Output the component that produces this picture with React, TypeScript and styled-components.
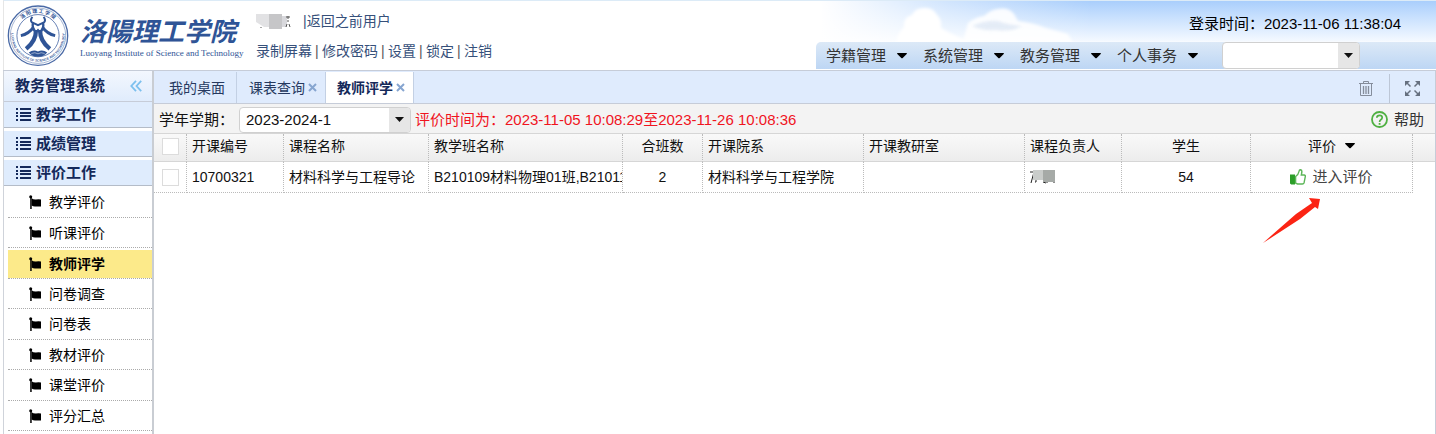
import React from 'react';
import styled, { createGlobalStyle, css } from 'styled-components';

const GlobalStyle = createGlobalStyle`
  * { box-sizing: border-box; }
  body {
    margin: 0;
    background: #fff;
    color: #111;
    font-family: "Liberation Sans", "Noto Sans CJK SC", sans-serif;
    font-size: 14px;
    line-height: 20px;
  }
  a { color: inherit; text-decoration: none; }
  button, select, input { font: inherit; color: inherit; margin: 0; }
  button { border: 0; padding: 0; background: none; cursor: pointer; }
  ul { list-style: none; margin: 0; padding: 0; }
  svg { display: block; flex: none; }
`;

const Page = styled.div`
  display: flex;
  flex-direction: column;
  min-height: 100vh;
  padding-left: 3px;
`;

/* ---------- header ---------- */

const Header = styled.header`
  position: relative;
  display: flex;
  height: 70px;
  border-top: 1px solid #dcebf7;
  border-left: 1px solid #e6e6e6;
  background:
    linear-gradient(to right, #fff 57%, rgba(255, 255, 255, 0.45) 66%, rgba(255, 255, 255, 0) 76%),
    linear-gradient(to bottom, #a9cefc 0, #c6dffe 15px, #f4f9ff 40px, #fff 42px);
`;

const Brand = styled.a`
  display: flex;
  gap: 11px;
  width: 252px;
  padding: 3px 0 0 3px;
`;

const BrandText = styled.span`
  display: flex;
  flex-direction: column;
  color: #2f5496;
  padding-top: 8px;
  white-space: nowrap;
`;

const BrandName = styled.span`
  font: italic 700 26px/36px "Noto Sans CJK SC", sans-serif;
`;

const BrandLatin = styled.span`
  font: 9px/10px "Liberation Serif", serif;
`;

const UserLinks = styled.nav`
  display: flex;
  flex-direction: column;
  gap: 10px;
  padding-top: 10px;
  color: #36507a;
  white-space: nowrap;
`;

const LinkRow = styled.div<{ $gap: number }>`
  display: flex;
  align-items: center;
  gap: ${p => p.$gap}px;
  height: 20px;
`;

const Divider = styled.span`
  width: 4px;
  color: #555;
`;

const Spacer = styled.div`
  flex: 1;
`;

const Clouds = styled.svg`
  position: absolute;
  right: 270px;
  top: 0;
`;

const HeaderRight = styled.div`
  position: relative;
  display: flex;
  flex-direction: column;
  width: 620px;
  font-size: 15px;
`;

const LoginTime = styled.div`
  height: 41px;
  padding: 13px 35px 0 0;
  text-align: right;
  color: #000;
`;

const MenuBar = styled.nav`
  display: flex;
  align-items: center;
  height: 27px;
  padding-left: 10px;
  border-top-left-radius: 5px;
  background: linear-gradient(to bottom, #dce9f7, #bdd6f4);
  color: #333;
`;

const MenuButton = styled.button`
  display: flex;
  align-items: center;
  gap: 11px;
  width: 97px;
`;

/* ---------- shared drop-down ---------- */

const SelectWrap = styled.span<{ $w: number; $h: number }>`
  position: relative;
  display: flex;
  width: ${p => p.$w}px;
  height: ${p => p.$h}px;
  border: 1px solid #d0d0d0;
  border-radius: 4px;
  background: #fff;
  overflow: hidden;

  select {
    flex: 1;
    min-width: 0;
    appearance: none;
    border: 0;
    padding: 0 22px 0 6px;
    background: transparent;
    font-size: 15px;
    color: #111;
  }
`;

const SelectArrow = styled.span`
  position: absolute;
  top: 0;
  right: 0;
  bottom: 0;
  width: 21px;
  display: flex;
  align-items: center;
  justify-content: center;
  background: #e6e6e6;
  pointer-events: none;
`;

const MenuSelect = styled.div`
  margin-left: 8px;
`;

/* ---------- body ---------- */

const Body = styled.div`
  flex: 1;
  display: flex;
  border-top: 1px solid #c6ccd8;
`;

const Sidebar = styled.aside`
  width: 151px;
  flex: none;
  border-left: 1px solid #cfd3da;
  border-right: 2px solid #c9cdd3;
  color: #14295a;
`;

const SideTitle = styled.div`
  display: flex;
  align-items: center;
  justify-content: space-between;
  height: 31px;
  padding: 0 10px 0 11px;
  border-bottom: 1px solid #c6ccd8;
  background: linear-gradient(to bottom, #f3f7fe, #e0ecfc);
  font-weight: 700;
  font-size: 15px;
`;

const Groups = styled.div`
  display: flex;
  flex-direction: column;
  gap: 3px;
`;

const Group = styled.button`
  display: flex;
  align-items: center;
  gap: 5px;
  height: 26px;
  padding-left: 12px;
  border-bottom: 1px solid #b4bcc8;
  background: #dfecfd;
  font-weight: 700;
  font-size: 15px;
`;

const SubList = styled.ul`
  padding: 1px 0 0 4px;
`;

const SubItem = styled.li<{ $active?: boolean }>`
  height: 30px;
  padding-top: ${p => (p.$active ? 2 : 0)}px;
  border-bottom: 1px dotted #aaa;
  color: #000;

  &:nth-child(odd) { height: 31px; }

  a {
    display: flex;
    align-items: center;
    gap: 8px;
    height: 100%;
    padding-left: 21px;
    ${p => p.$active && css`
      background: #fcea8a;
      font-weight: 700;
    `}
  }
`;

const Main = styled.main`
  flex: 1;
  min-width: 0;
  border-right: 1px solid #c6ccd8;
`;

const TabBar = styled.div`
  display: flex;
  align-items: flex-end;
  height: 33px;
  border-bottom: 1px solid #c6ccd8;
  background: #dfebfd;
  color: #26395f;
`;

const Tab = styled.div<{ $active?: boolean }>`
  display: flex;
  align-items: center;
  gap: 3px;
  height: 31px;
  padding: 0 8px 0 12px;
  border-right: 1px solid #c3d0e4;
  white-space: nowrap;

  &:first-child { padding: 0 11px 0 15px; }

  ${p => p.$active && css`
    padding-left: 11px;
    background: #fff;
    color: #14295a;
    font-weight: 700;
  `}
`;

const ToolButton = styled.button<{ $divided?: boolean }>`
  display: flex;
  align-items: center;
  justify-content: center;
  width: 46px;
  height: 29px;
  ${p => p.$divided && css`border-left: 1px solid #bcc6d6;`}
`;

const Toolbar = styled.div`
  display: flex;
  align-items: center;
  height: 30px;
  padding: 2px 11px 0 5px;
  border-bottom: 1px solid #d6d6d6;
  background: #f3f3f3;
  font-size: 15px;
  white-space: nowrap;
`;

const TermLabel = styled.label`
  width: 80px;
`;

const Notice = styled.span`
  margin-left: 4px;
  color: #f0141e;
`;

const HelpLink = styled.a`
  display: flex;
  align-items: center;
  gap: 6px;
  color: #333;
`;

const Grid = styled.table`
  width: 100%;
  table-layout: fixed;
  border-collapse: separate;
  border-spacing: 0;
`;

const HeadRow = styled.tr`
  background: linear-gradient(to bottom, #f9f9f9, #ececec);
`;

const Th = styled.th<{ $center?: boolean; $last?: boolean }>`
  height: 28px;
  padding: 0 5px;
  border-right: ${p => (p.$last ? '0' : '1px dotted #bbb')};
  border-bottom: 1px solid #d6d6d6;
  font-weight: 400;
  text-align: ${p => (p.$center ? 'center' : 'left')};
  line-height: 24px;
  vertical-align: top;
  white-space: nowrap;
`;

const Td = styled.td<{ $center?: boolean; $last?: boolean; $open?: boolean }>`
  position: relative;
  height: 31px;
  padding: 0 5px;
  ${p => !p.$last && css`
    border-right: 1px dotted #bbb;
    border-bottom: 1px dotted #bbb;
  `}
  text-align: ${p => (p.$center ? 'center' : 'left')};
  white-space: nowrap;
  overflow: ${p => (p.$open ? 'visible' : 'hidden')};
`;

const Inline = styled.span`
  display: flex;
  align-items: center;
  justify-content: center;
  gap: 9px;
`;

const Check = styled.input`
  appearance: none;
  display: block;
  width: 17px;
  height: 17px;
  margin: 0 3px;
  border: 1px solid #dcdcdc;
  background: #fff;

  ${HeadRow} & { margin-top: 4px; }
`;

const EnterLink = styled.a`
  display: flex;
  align-items: center;
  justify-content: center;
  gap: 6px;
  color: #444;
  font-size: 15px;
`;

const Pointer = styled.svg`
  position: absolute;
  left: 12px;
  top: 36px;
`;

/* ---------- drawings ---------- */

const Caret = () => (
  <svg width="10" height="6" viewBox="0 0 10 6" aria-hidden="true">
    <path d="M.6 0h8.800q.9.300.3 1L5.700 5q-.7.700-1.400 0L.3 1Q-.3.300.6 0z" fill="#000" />
  </svg>
);

const SmallCaret = () => (
  <svg width="9" height="5" viewBox="0 0 9 5" aria-hidden="true">
    <path d="M0 0h9L4.500 5z" fill="#111" />
  </svg>
);

const Seal = () => (
  <svg width="62" height="64" viewBox="18 12 188 192" aria-hidden="true">
    <defs>
      <path id="ringTop" d="M46 122A68 68 0 1 1 178 122" />
      <path id="ringLow" d="M32 92A81 81 0 1 0 192 92" />
    </defs>
    <g fill="none" stroke="#4a6aa6">
      <circle cx="112" cy="107" r="90" strokeWidth="4" />
      <circle cx="112" cy="107" r="84" strokeWidth="1.500" />
      <circle cx="112" cy="107" r="64" strokeWidth="2.500" />
    </g>
    <g fill="#2f5496" textAnchor="middle">
      <text fontSize="10" fontWeight="700" fontFamily="Liberation Sans, sans-serif">
        <textPath href="#ringLow" startOffset="50%">LUOYANG INSTITUTE OF SCIENCE AND TECHNOLOGY</textPath>
      </text>
      <text fontSize="15" fontFamily="Noto Sans CJK SC, sans-serif" fontWeight="700">
        <textPath href="#ringTop" startOffset="50%">洛 阳 理 工 学 院</textPath>
      </text>
    </g>
    <g fill="none" stroke="#2f5496">
      <path d="M95 50q-8 10-1 17l18 8 18-8q7-7-1-17" strokeWidth="6" />
      <path d="M97 68q-5 14 9 29M127 68q5 14-9 29" strokeWidth="7" />
      <path d="M98 82q-14 20-38 25M126 82q14 20 38 25" strokeWidth="9" />
      <path d="M106 90q0 34-30 57M118 90q0 34 30 57" strokeWidth="13" />
      <path d="M106 96l6-7 6 7" strokeWidth="5" />
    </g>
    <path d="M84 158q14-10 28-3 14-7 28 3-10 13-28 13t-28-13z" fill="#2f5496" />
    <path d="M92 161q11-5 20 1 9-6 20-1" fill="none" stroke="#fff" strokeWidth="1.500" />
  </svg>
);

const NameMosaic = () => (
  <svg width="35" height="18" viewBox="0 0 35 18" aria-hidden="true">
    <path d="M0 2h13v13H8L0 10z" fill="#e2e2e4" />
    <path d="M13 2h13v15H13z" fill="#c6c6c8" />
    <path d="M26 4h5v11h-5z" fill="#d8d8dc" />
    <path d="M30 5h4M31 9h2M32 4v3M31 12l-1 3M33 12l1 3M5 15v1" stroke="#555" fill="none" />
  </svg>
);

const TeacherMosaic = () => (
  <svg width="26" height="16" viewBox="0 0 26 16" aria-hidden="true">
    <path d="M0 3h8M4 3L1 14M3 7h3v6H5M13 13l3 1M17 10v4M24 3v11" stroke="#222" fill="none" />
    <path d="M3 1h10v10H3z" fill="#c9ccca" />
    <path d="M13 1h12v12H13z" fill="#a6aaa7" />
  </svg>
);

const CloudArt = () => (
  <Clouds width="280" height="41" viewBox="0 0 280 41" aria-hidden="true">
    <defs>
      <filter id="soft" x="-10%" y="-20%" width="120%" height="150%">
        <feGaussianBlur stdDeviation="1.600" />
      </filter>
    </defs>
    <g fill="#fff" filter="url(#soft)">
      <path d="M10 44q0-10 8-18-1-10 8-12 3-7 12-7 9-1 13 7 5 4 4 13 8 5 22 11l8 6z" />
      <path d="M82 22q8-6 16-7 6-6 14-7 10-2 16 5l4 7q16 2 28 7l22 6 6 11H76z" opacity=".9" />
    </g>
    <g fill="#dfe8f5" filter="url(#soft)" opacity=".8">
      <path d="M86 25q14-6 26-5 10 4 24 5-10 6-26 4-14 1-24-4z" />
    </g>
  </Clouds>
);

const ListIcon = () => (
  <svg width="15" height="13" viewBox="0 0 15 13" aria-hidden="true" fill="#14295a">
    {[0, 4, 7, 11].map(y => (
      <React.Fragment key={y}>
        <rect x="0" y={y} width="2" height="2" />
        <rect x="4" y={y} width="11" height="2" />
      </React.Fragment>
    ))}
  </svg>
);

const FlagIcon = () => (
  <svg width="12" height="14" viewBox="0 0 12 14" aria-hidden="true">
    <circle cx="1.700" cy="1.700" r="1.500" />
    <path d="M1.200 2h1.500v12H1.200z" />
    <path d="M2.600 3.200q1.800 1.400 4.400 1.200 2.600-.3 5 0v7H6Q4 11.400 2.600 10.400z" />
  </svg>
);

const CollapseIcon = () => (
  <svg width="12" height="12" viewBox="0 0 12 12" fill="none" stroke="#7cc0ee" strokeWidth="1.800" aria-hidden="true">
    <path d="M6 .8L1.300 6 6 11.200M11.200.8L6.500 6l4.700 5.200" />
  </svg>
);

const CloseIcon = () => (
  <svg width="9" height="9" viewBox="0 0 9 9" stroke="#86a5d0" strokeWidth="2" aria-hidden="true">
    <path d="M1 1l7 7M8 1L1 8" />
  </svg>
);

const TrashIcon = () => (
  <svg width="14" height="15" viewBox="0 0 14 15" fill="none" stroke="#858d9b" aria-hidden="true">
    <path d="M0 2.500h14M4.500 2V.5h5V2" />
    <path d="M1.500 3v11.500h11V3" />
    <path d="M4.500 5v8M7 5v8M9.500 5v8" strokeWidth="1.300" />
  </svg>
);

const ExpandIcon = () => (
  <svg width="15" height="15" viewBox="0 0 15 15" aria-hidden="true">
    <path d="M0 0h5L0 5zM15 0v5L10 0zM0 15v-5l5 5zM15 15h-5l5-5z" fill="#66707f" />
    <path d="M1.500 1.500l4 4M13.500 1.500l-4 4M1.500 13.500l4-4M13.500 13.500l-4-4" stroke="#66707f" strokeWidth="1.500" />
  </svg>
);

const HelpIcon = () => (
  <svg width="17" height="17" viewBox="0 0 17 17" fill="none" stroke="#4fb042" aria-hidden="true">
    <circle cx="8.500" cy="8.500" r="7.500" strokeWidth="1.800" />
    <path d="M5.800 6.800Q6 4.300 8.600 4.300t2.600 2.300Q11.200 8 9.800 8.800 8.600 9.500 8.600 11" strokeWidth="1.700" />
    <path d="M8.600 12v1.800" strokeWidth="1.800" />
  </svg>
);

const ThumbIcon = () => (
  <svg width="16" height="16" viewBox="0 0 16 16" aria-hidden="true">
    <path d="M0 5.500h5v10H1.200L0 14.500z" fill="#2b9e28" />
    <path
      d="M5.600 7.500Q8.500 5.500 9 2.500 9.200.7 10.600.8q1.600.4 1.200 2.700L11.300 6h3q1.300.3 1 1.700l-1.200 6q-.4 1.300-1.700 1.300H7.500l-1.900-.9z"
      fill="#fff"
      stroke="#5cb658"
      strokeWidth="1.400"
    />
  </svg>
);

/* ---------- data ---------- */

const menus = ['学籍管理', '系统管理', '教务管理', '个人事务'];
const groups = ['教学工作', '成绩管理', '评价工作'];
const pages = ['教学评价', '听课评价', '教师评学', '问卷调查', '问卷表', '教材评价', '课堂评价', '评分汇总'];
const currentPage = '教师评学';
const userLinks = ['录制屏幕', '修改密码', '设置', '锁定', '注销'];
const columnWidths = [33, 97, 145, 194, 80, 161, 161, 97, 129, 162];

export default function App() {
  return (
    <Page>
      <GlobalStyle />
      <Header>
        <Brand href="#">
          <Seal />
          <BrandText>
            <BrandName>洛陽理工学院</BrandName>
            <BrandLatin>Luoyang Institute of Science and Technology</BrandLatin>
          </BrandText>
        </Brand>
        <UserLinks>
          <LinkRow $gap={12}>
            <NameMosaic />
            <span>|<a href="#">返回之前用户</a></span>
          </LinkRow>
          <LinkRow $gap={3}>
            {userLinks.map((t, i) => (
              <React.Fragment key={t}>
                {i > 0 && <Divider>|</Divider>}
                <a href="#">{t}</a>
              </React.Fragment>
            ))}
          </LinkRow>
        </UserLinks>
        <Spacer />
        <CloudArt />
        <HeaderRight>
          <LoginTime>登录时间：2023-11-06 11:38:04</LoginTime>
          <MenuBar>
            {menus.map(m => (
              <MenuButton key={m} type="button">{m}<Caret /></MenuButton>
            ))}
            <MenuSelect>
              <SelectWrap $w={138} $h={27}>
                <select aria-label="快捷菜单"><option value="" /></select>
                <SelectArrow><SmallCaret /></SelectArrow>
              </SelectWrap>
            </MenuSelect>
          </MenuBar>
        </HeaderRight>
      </Header>

      <Body>
        <Sidebar>
          <SideTitle>教务管理系统<button type="button" aria-label="收起"><CollapseIcon /></button></SideTitle>
          <Groups>
            {groups.map(g => (
              <Group key={g} type="button"><ListIcon />{g}</Group>
            ))}
          </Groups>
          <SubList>
            {pages.map(p => (
              <SubItem key={p} $active={p === currentPage}>
                <a href="#"><FlagIcon />{p}</a>
              </SubItem>
            ))}
          </SubList>
        </Sidebar>

        <Main>
          <TabBar>
            <Tab><a href="#">我的桌面</a></Tab>
            <Tab><a href="#">课表查询</a><button type="button" aria-label="关闭课表查询"><CloseIcon /></button></Tab>
            <Tab $active><a href="#">教师评学</a><button type="button" aria-label="关闭教师评学"><CloseIcon /></button></Tab>
            <Spacer />
            <ToolButton type="button" aria-label="清空"><TrashIcon /></ToolButton>
            <ToolButton type="button" aria-label="全屏" $divided><ExpandIcon /></ToolButton>
          </TabBar>
          <Toolbar>
            <TermLabel htmlFor="term">学年学期：</TermLabel>
            <SelectWrap $w={172} $h={26}>
              <select id="term" defaultValue="2023-2024-1"><option>2023-2024-1</option></select>
              <SelectArrow><SmallCaret /></SelectArrow>
            </SelectWrap>
            <Notice>评价时间为：2023-11-05 10:08:29至2023-11-26 10:08:36</Notice>
            <Spacer />
            <HelpLink href="#"><HelpIcon />帮助</HelpLink>
          </Toolbar>
          <Grid>
            <colgroup>
              {columnWidths.map((w, i) => <col key={i} width={w} />)}
              <col />
            </colgroup>
            <thead>
              <HeadRow>
                <Th><Check type="checkbox" aria-label="全选" /></Th>
                <Th>开课编号</Th>
                <Th>课程名称</Th>
                <Th>教学班名称</Th>
                <Th $center>合班数</Th>
                <Th>开课院系</Th>
                <Th>开课教研室</Th>
                <Th>课程负责人</Th>
                <Th $center>学生</Th>
                <Th $center><Inline>评价<Caret /></Inline></Th>
                <Th $last />
              </HeadRow>
            </thead>
            <tbody>
              <tr>
                <Td><Check type="checkbox" aria-label="选择 10700321" /></Td>
                <Td>10700321</Td>
                <Td>材料科学与工程导论</Td>
                <Td>B210109材料物理01班,B21011</Td>
                <Td $center>2</Td>
                <Td>材料科学与工程学院</Td>
                <Td />
                <Td><TeacherMosaic /></Td>
                <Td $center>54</Td>
                <Td $center $open>
                  <EnterLink href="#"><ThumbIcon />进入评价</EnterLink>
                  <Pointer width="58" height="46" viewBox="0 0 58 46" aria-hidden="true">
                    <path d="M0 45L33 16 49 5 46 0l11 1-2 10-3-2-15 12z" fill="#fb2414" />
                  </Pointer>
                </Td>
                <Td $last />
              </tr>
            </tbody>
          </Grid>
        </Main>
      </Body>
    </Page>
  );
}
